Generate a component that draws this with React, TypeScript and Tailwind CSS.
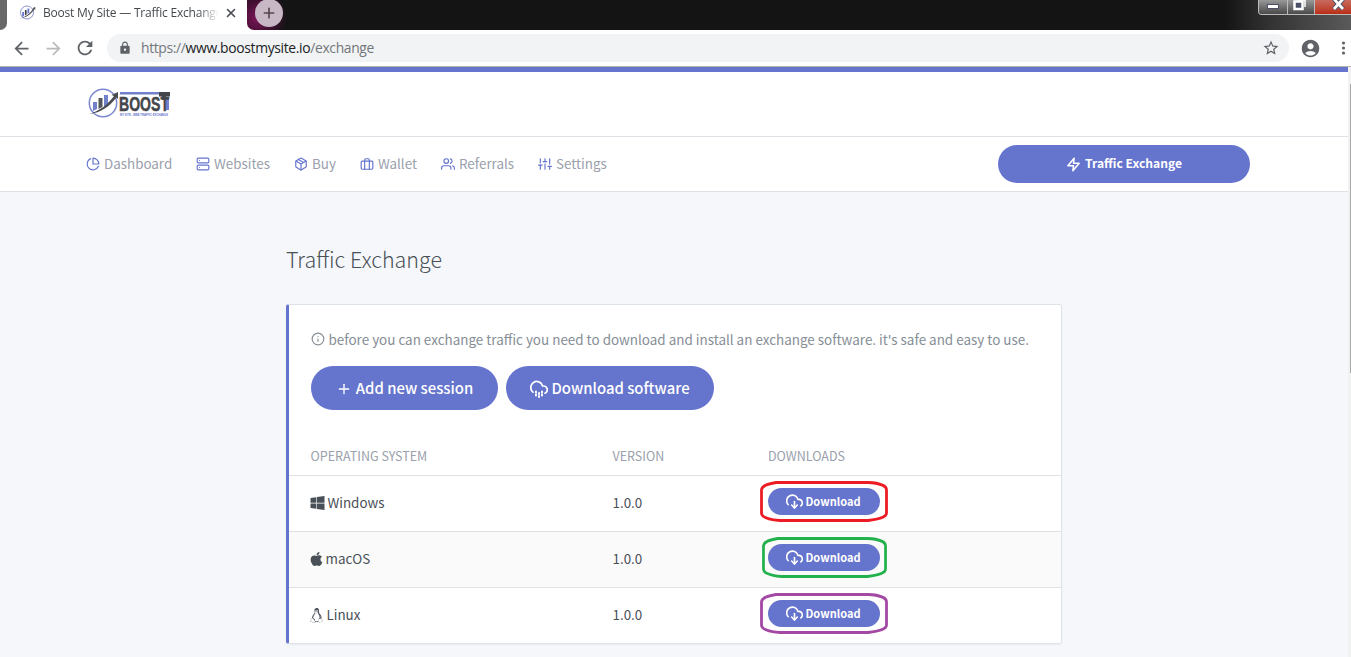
import React from "react";
import { Plus, X } from "lucide-react";
import { FaWindows, FaApple, FaLinux } from "react-icons/fa";
import { MdRefresh, MdStarBorder, MdAccountCircle, MdLock, MdArrowBack, MdArrowForward } from "react-icons/md";
import { FiPieChart, FiServer, FiPackage, FiBriefcase, FiUsers, FiSliders, FiZap, FiInfo, FiPlus, FiDownloadCloud } from "react-icons/fi";

const nav = [
  { icon: FiPieChart, label: "Dashboard", cls: "w-[110px]" },
  { icon: FiServer, label: "Websites", cls: "w-[98px]" },
  { icon: FiPackage, label: "Buy", cls: "w-[66px]" },
  { icon: FiBriefcase, label: "Wallet", cls: "w-[81px]" },
  { icon: FiUsers, label: "Referrals", cls: "w-[97px]" },
  { icon: FiSliders, label: "Settings", cls: "w-[90px]" },
];

const rows = [
  { icon: FaWindows, name: "Windows", iconCls: "w-[15px] h-[16px] mr-[2.500px]", ring: "text-[#ed1c24] left-[-8px] w-[128px]", bg: "bg-white" },
  { icon: FaApple, name: "macOS", iconCls: "w-[13px] h-[16px] mr-[2.500px]", ring: "text-[#22b14c] left-[-6px] w-[125px]", bg: "bg-[#fafafa]" },
  { icon: FaLinux, name: "Linux", iconCls: "w-[13px] h-[15px] mr-[3.500px]", ring: "text-[#a349a4] left-[-8px] w-[128px]", bg: "bg-white" },
];

function BrandMark({ className }: { className: string }) {
  return (
    <svg className={className} viewBox="0 0 31 30" fill="none">
      <circle cx="14.500" cy="15" r="13" stroke="#8a95d2" strokeWidth="2" />
      <path d="M5 14h3.500v8L5 24zM15.500 7H19v8l-3.500 3z" fill="#6574cd" />
      <path d="M10.300 10h3.500v9l-3.500 2z" fill="#45464b" />
      <path d="M1 27C13 23 21 16 27 7L25.500 6.500 31 3.500V10L29.500 8.500C23 18 14 25 1 27z" fill="#55565c" />
    </svg>
  );
}

function CloudSnow({ className }: { className: string }) {
  return (
    <svg className={className} viewBox="0 0 24 24" fill="none" stroke="currentColor" strokeWidth="2.300" strokeLinecap="round" strokeLinejoin="round">
      <path d="M20 17.580A5 5 0 0 0 18 8h-1.260A8 8 0 1 0 4 16.250" />
      <path d="M8 15.500v1M8 19.500v1M12 17.500v1M12 21.500v1M16 15.500v1M16 19.500v1" strokeWidth="2.700" />
    </svg>
  );
}

export default function App() {
  return (
    <div className="flex h-[657px] w-[1351px] flex-col overflow-hidden bg-white font-['Noto_Sans_CJK_SC',sans-serif]">
      <div className="flex h-[30px] shrink-0 bg-[linear-gradient(90deg,#141414_0,#141414_1225px,#333_1270px,#5a5a5a_1351px)] font-['Open_Sans',sans-serif]">
        <div className="h-[30px] w-[7px] bg-white"><div className="h-[30px] w-[7px] rounded-br-[7px] bg-[#686868]" /></div>
        <div className="flex h-[30px] w-[240px] items-start bg-white pl-[12px]">
          <BrandMark className="mt-[5px] h-[15px] w-[17px]" />
          <span className="ml-[7px] mt-[4px] w-[175px] overflow-hidden whitespace-nowrap text-[12px] leading-[18px] tracking-[-0.2px] text-[#45494d] [mask-image:linear-gradient(90deg,#000_155px,transparent_176px)]">Boost My Site — Traffic Exchange</span>
          <X className="ml-[6px] mt-[6px] h-[14px] w-[14px] text-[#4a4d51]" strokeWidth={2.8} />
        </div>
        <div className="h-[30px] w-[44px] bg-white">
          <div className="flex h-[30px] w-[44px] items-start rounded-bl-[7px] bg-[radial-gradient(circle_at_10px_18px,#7a1557_0,#481036_15px,#141414_30px)] pl-[8px]">
            <div className="-mt-[1px] flex h-[28px] w-[28px] items-center justify-center rounded-full bg-[#c8b7c5]">
              <Plus className="h-[16px] w-[16px] text-[#54484f]" strokeWidth={2.5} />
            </div>
          </div>
        </div>
        <div className="flex-1" />
        <div className="flex h-[15px] w-[93px] overflow-hidden rounded-bl-[4px] border-b border-l border-[#bbb] bg-[#555]">
          <div className="flex w-[29px] justify-center border-r border-[#bbb] bg-linear-to-b from-[#999] to-[#4a4a4a]"><div className="mt-[4px] h-[5px] w-[12px] border border-[#4b5066] bg-white" /></div>
          <div className="flex w-[27px] justify-center border-r border-[#bbb] bg-linear-to-b from-[#999] to-[#4a4a4a]">
            <svg className="-ml-[3px] h-[11px] w-[13px]" viewBox="0 0 13 11" fill="none"><path d="M4 0h8v7" stroke="#fff" strokeWidth="1.500" /><rect x="1.500" y="1.500" width="8" height="7.500" fill="#4b5066" stroke="#fff" strokeWidth="2.500" /></svg>
          </div>
          <div className="flex flex-1 items-start justify-center bg-linear-to-b from-[#c86a5e] to-[#b92b12] pl-[10px]">
            <svg className="h-[11px] w-[13px]" viewBox="0 0 13 11" fill="none"><path d="M2 -1L11 9M11 -1L2 9" stroke="#4b5066" strokeWidth="4.800" /><path d="M2 -1L11 9M11 -1L2 9" stroke="#fff" strokeWidth="2.800" /></svg>
          </div>
        </div>
      </div>
      <div className="flex h-[36px] shrink-0 items-center bg-white text-[#5f6368] font-['Open_Sans',sans-serif]">
        <MdArrowBack className="ml-[11px] h-[21px] w-[21px]" />
        <MdArrowForward className="ml-[11px] h-[21px] w-[21px] text-[#b9bbbd]" />
        <MdRefresh className="ml-[10px] h-[22px] w-[22px]" />
        <div className="ml-[11px] flex h-[28px] w-[1182px] shrink-0 items-center rounded-full bg-[#f1f3f4]">
          <MdLock className="ml-[11px] h-[14px] w-[14px]" />
          <span className="ml-[9px] flex-1 whitespace-nowrap text-[13.900px] tracking-[-0.350px] text-[#73777b]">https://<span className="text-[#202124]">www.boostmysite.io</span>/exchange</span>
          <MdStarBorder className="mr-[9px] h-[18px] w-[18px]" />
        </div>
        <MdAccountCircle className="ml-[11px] h-[21px] w-[21px] shrink-0" />
        <svg className="ml-[20px] h-[14px] w-[5px] shrink-0" viewBox="0 0 5 14" fill="currentColor"><circle cx="2.500" cy="2" r="1.600" /><circle cx="2.500" cy="7" r="1.600" /><circle cx="2.500" cy="12" r="1.600" /></svg>
      </div>
      <div className="h-px shrink-0 bg-[#b6b4ad]" />
      <div className="flex min-h-0 flex-1">
        <div className="flex w-[1348px] flex-col bg-[#f5f7fb]">
          <div className="h-[5px] shrink-0 bg-[#6574cd]" />
          <header className="flex h-[65px] shrink-0 items-center border-b border-[#dee2e6] bg-white pl-[88px]">
            <svg className="-mt-[2px] h-[32px] w-[83px]" viewBox="0 0 83 32" fill="none">
              <circle cx="15" cy="16" r="13.700" stroke="#7b88d0" strokeWidth="1.500" />
              <path d="M5 15h4v7l-4 2zM16 8h4v9l-4 3z" fill="#7380cc" />
              <path d="M10.500 11h4v9l-4 2z" fill="#55565c" />
              <path d="M1 27C12 24 20 17 26 9L23.500 8 30 5V12L28.500 10.500C22 19 13 26 1 27z" fill="#4a4b50" />
              <path d="M32 5h40v2.500H32zM78 10h3v13h-3z" fill="#7380cc" />
              <path d="M71 5h11v4.500H71zM74 8h4v5h-4z" fill="#45464b" />
              <text x="31" y="24" fontSize="20.500" fontWeight="700" fontFamily="Liberation Sans" textLength="50" lengthAdjust="spacingAndGlyphs" fill="#45464b" stroke="#45464b" strokeWidth="0.500">BOOST</text>
              <text x="32" y="28.500" fontSize="3.800" fontWeight="700" fontFamily="Liberation Sans" textLength="48" lengthAdjust="spacingAndGlyphs" fill="#6574cd">MY SITE - WEB TRAFFIC EXCHANGE</text>
            </svg>
          </header>
          <nav className="flex h-[55px] shrink-0 items-center border-b border-[#dee2e6] bg-white pl-[85.500px] text-[13.400px] text-[#9aa0ac]">
            {nav.map(({ icon: Icon, label, cls }) => (
              <div key={label} className={`${cls} flex shrink-0 items-center whitespace-nowrap`}>
                <Icon className="mr-[4.500px] h-[14px] w-[14px] shrink-0 text-[#6574cd]" />
                <span className="-mt-[2px]">{label}</span>
              </div>
            ))}
            <div className="ml-auto mr-[98px] flex h-[38px] w-[252px] items-center justify-center rounded-full bg-[#6574cd] text-[12.100px] font-bold text-white">
              <FiZap className="mr-[4px] h-[15px] w-[15px]" strokeWidth={2.5} />
              <span className="-mt-[2px]">Traffic Exchange</span>
            </div>
          </nav>
          <main className="flex flex-1 flex-col pl-[286px]">
            <h1 className="mt-[49px] h-[36px] text-[21.450px] font-light leading-[36px] text-[#495057]">Traffic Exchange</h1>
            <section className="mt-[27px] h-[340px] w-[776px] overflow-hidden rounded-[3px] border border-l-[3px] border-[#dee2e9] border-l-[#6574cd] bg-white shadow-[0_1px_2px_rgba(0,0,0,0.05)]">
              <div className="mt-[24px] flex h-[22px] items-center whitespace-nowrap pl-[22px] text-[13.440px] text-[#868e96]">
                <FiInfo className="-mt-[2px] mr-[3.500px] h-[14px] w-[14px]" />
                <span className="-mt-[2px]">before you can exchange traffic you need to download and install an exchange software. it's safe and easy to use.</span>
              </div>
              <div className="flex gap-[8px] pl-[22px] pt-[15px] text-[14.900px] font-medium text-white">
                <div className="flex h-[44px] w-[187px] items-center justify-center rounded-full bg-[#6574cd]"><FiPlus className="mr-[4px] mt-[2px] h-[16px] w-[16px]" /><span>Add new session</span></div>
                <div className="flex h-[44px] w-[208px] items-center justify-center rounded-full bg-[#6574cd]"><CloudSnow className="mr-[3px] mt-[2px] h-[18px] w-[18px]" /><span>Download software</span></div>
              </div>
              <div className="mt-[28px] flex h-[38px] items-center border-b border-[#dee2e6] pl-[21.500px] text-[12.500px] text-[#9aa0ac]">
                <span className="w-[302px]">OPERATING SYSTEM</span><span className="w-[155.500px]">VERSION</span><span>DOWNLOADS</span>
              </div>
              {rows.map(({ icon: Icon, name, iconCls, ring, bg }) => (
                <div key={name} className={`${bg} flex h-[56px] items-center border-b border-[#dee2e6] pl-[21px] text-[13.400px] text-[#495057] last:h-[55px] last:border-b-0`}>
                  <div className="flex w-[302.500px] items-center"><Icon className={iconCls} /><span className="-mt-[2px]">{name}</span></div>
                  <span className="-mt-[2px] w-[155.500px]">1.0.0</span>
                  <div className="relative -mt-[5px] flex h-[27px] w-[112px] items-center justify-center rounded-full bg-[#6574cd] pr-[2px] text-[11px] font-bold text-white">
                    <FiDownloadCloud className="mr-[3px] h-[17px] w-[17px]" strokeWidth={2.3} /><span>Download</span>
                    <svg className={`${ring} absolute top-[-7px] h-[41px]`} viewBox="0 0 128 41" preserveAspectRatio="none" fill="none" stroke="currentColor" strokeWidth="2.800"><path d="M16 1.500H108C120 2 126.500 5 126.500 9V32C126.500 36 120 38 108 39.500H20C8 38.500 1.500 36 1.500 32V9C1.500 5 6 3 16 1.500z" /></svg>
                  </div>
                </div>
              ))}
            </section>
          </main>
        </div>
        <div className="flex w-[3px] flex-col bg-[#f1f1f1]"><div className="ml-[2px] mt-[17px] h-[289px] w-px bg-[#a8a8a8]" /></div>
      </div>
    </div>
  );
}
